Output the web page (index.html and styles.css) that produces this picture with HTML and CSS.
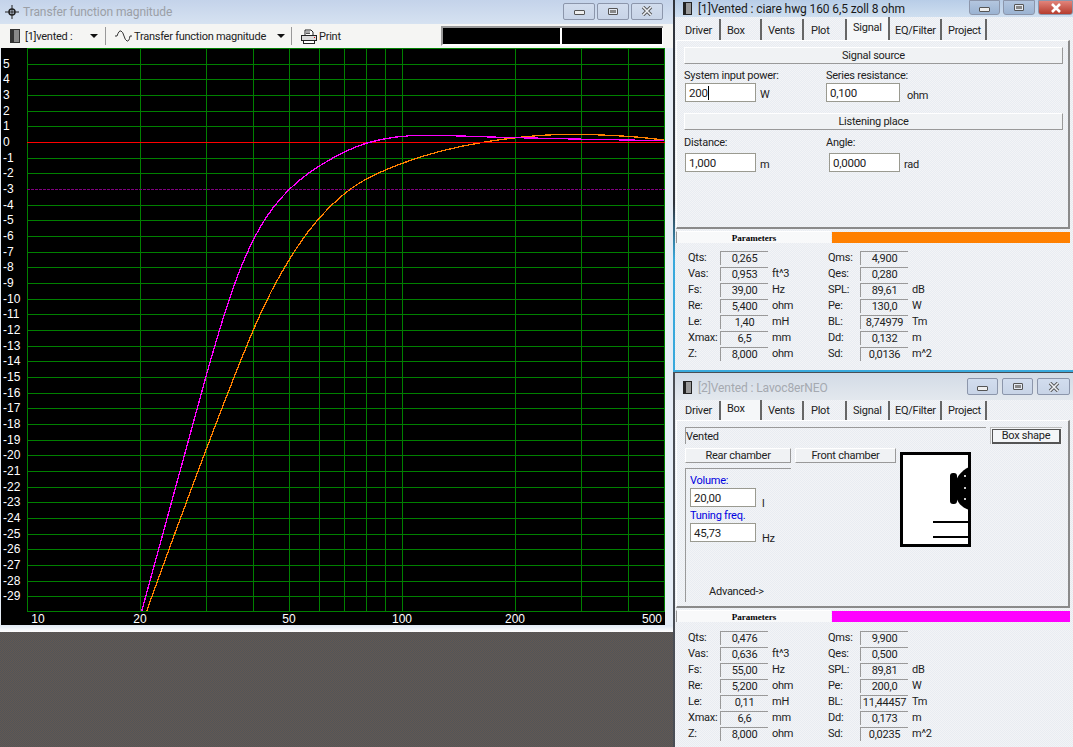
FILE: index.html
```html
<!DOCTYPE html>
<html lang="en">
<head>
    <meta charset="UTF-8">
    <title>Transfer function magnitude</title>
    <link rel="stylesheet" href="styles.css">
</head>
<body>
<div class="screen">
    <div class="left-col">
        <div class="plot-win">
            <div class="title-bar">
                <svg class="title-icon" width="14" height="14" viewBox="0 0 14 14"><path d="M0 7H14M7 0V14" stroke="#222"/><circle cx="7" cy="7" r="3" fill="none" stroke="#222" stroke-width="1.5"/></svg>
                <span class="title-text">Transfer function magnitude</span>
                <div class="caps">
                    <div class="cap cap-min"><span class="glyph-min"></span></div>
                    <div class="cap cap-max"><span class="glyph-max"></span></div>
                    <div class="cap cap-close"><svg width="12" height="10" viewBox="0 0 12 10"><path d="M2 1L10 9M10 1L2 9" stroke="#555" stroke-width="3.4"/><path d="M2 1L10 9M10 1L2 9" stroke="#eef1f6" stroke-width="1.6"/></svg></div>
                </div>
            </div>
            <div class="toolbar">
                <svg class="tool-book" width="10" height="14" viewBox="0 0 10 14"><rect width="10" height="14" fill="#333"/><rect x="4" y="1" width="5" height="12" fill="#888"/></svg>
                <span class="tool-label tool-label-doc">[1]vented :</span>
                <span class="arrow"></span>
                <span class="tool-sep"></span>
                <svg class="tool-wave" width="17" height="12" viewBox="0 0 17 12"><path d="M0 6H2Q4 0 6 1T9 6T12 11T15 6H17" fill="none" stroke="#333"/></svg>
                <span class="tool-label tool-label-tf">Transfer function magnitude</span>
                <span class="arrow"></span>
                <span class="tool-sep tool-sep-b"></span>
                <svg class="tool-print" width="16" height="15" viewBox="0 0 16 15"><path d="M4 6V1H10L12 3V6" fill="#fff" stroke="#222"/><rect x="0.5" y="6.5" width="15" height="5" fill="#ddd" stroke="#222"/><rect x="2.5" y="11.5" width="11" height="3" fill="#fff" stroke="#222"/><path d="M5 3H9M5 4.500H9" stroke="#555"/><rect x="13" y="8" width="1" height="1" fill="#e00"/></svg>
                <span class="tool-label tool-label-print">Print</span>
                <div class="readouts">
                    <span class="readout readout-a"></span>
                    <span class="readout readout-b"></span>
                </div>
            </div>
            <div class="plot-row">
                <svg class="plot" width="664" height="577" viewBox="1 48 664 577">
                    <path class="grid" d="M27 48.500H665M27 64.500H665M27 79.500H665M27 95.500H665M27 111.500H665M27 126.500H665M27 158.500H665M27 173.500H665M27 205.500H665M27 220.500H665M27 236.500H665M27 252.500H665M27 267.500H665M27 283.500H665M27 299.500H665M27 314.500H665M27 330.500H665M27 346.500H665M27 361.500H665M27 377.500H665M27 393.500H665M27 408.500H665M27 424.500H665M27 440.500H665M27 455.500H665M27 471.500H665M27 487.500H665M27 502.500H665M27 518.500H665M27 534.500H665M27 549.500H665M27 565.500H665M27 581.500H665M27 596.500H665M27 611.500H665"/>
                    <path class="grid" d="M27.500 48V612M140.500 48V612M206.500 48V612M253.500 48V612M289.500 48V612M319.500 48V612M344.500 48V612M366.500 48V612M385.500 48V612M402.500 48V612M515.500 48V612M581.500 48V612M628.500 48V612M664.500 48V612"/>
                    <path class="grid-mark" d="M27 189.500H665"/>
                    <path class="curve curve-orange" d="M146.700 611C166.470 555.600 186.230 502.400 206 450C221.770 408.200 237.530 367.800 253.300 330C267.300 296.400 281.300 271.700 295.300 250C311.870 224.300 328.430 206.600 345 193.300C364.100 178 383.200 170.600 402.300 163.300C430.400 152.600 458.600 146.200 486.700 141.700C515 137.200 543.400 134.300 571.700 134.300C590 134.300 608.400 135.200 626.700 136.300C639.200 137.050 651.800 138.500 664.300 140"/>
                    <path class="zero-line" d="M27 142.500H665"/>
                    <path class="curve curve-magenta" d="M141.700 611C163.030 532.100 184.370 453.200 205.700 377.500C213.570 349.600 221.430 322.900 229.300 299.300C237.300 275.300 245.300 256 253.300 240C262.200 222.200 271.100 209.500 280 199.300C293.100 184.200 306.200 174.100 319.300 166C334.900 156.350 350.400 148 366 143.300C385.700 137.400 405.300 135.300 425 135.300C450 135.300 475 136.550 500 137.300C554.800 138.900 609.500 139.600 664.300 140.700"/>
                    <g class="y-labels">
                        <text x="3" y="68">5</text><text x="3" y="83">4</text><text x="3" y="99">3</text><text x="3" y="115">2</text><text x="3" y="130">1</text><text x="3" y="146">0</text>
                        <text x="3" y="162">-1</text><text x="3" y="177">-2</text><text x="3" y="193">-3</text><text x="3" y="209">-4</text><text x="3" y="224">-5</text><text x="3" y="240">-6</text>
                        <text x="3" y="256">-7</text><text x="3" y="271">-8</text><text x="3" y="287">-9</text><text x="3" y="303">-10</text><text x="3" y="318">-11</text><text x="3" y="334">-12</text>
                        <text x="3" y="350">-13</text><text x="3" y="365">-14</text><text x="3" y="381">-15</text><text x="3" y="397">-16</text><text x="3" y="412">-17</text><text x="3" y="428">-18</text>
                        <text x="3" y="444">-19</text><text x="3" y="459">-20</text><text x="3" y="475">-21</text><text x="3" y="491">-22</text><text x="3" y="506">-23</text><text x="3" y="522">-24</text>
                        <text x="3" y="538">-25</text><text x="3" y="553">-26</text><text x="3" y="569">-27</text><text x="3" y="585">-28</text><text x="3" y="600">-29</text>
                    </g>
                    <g class="x-labels">
                        <text x="38" y="623">10</text><text x="140" y="623">20</text><text x="289" y="623">50</text>
                        <text x="402" y="623">100</text><text x="515" y="623">200</text><text x="652" y="623">500</text>
                    </g>
                </svg>
            </div>
            <div class="plot-foot"></div>
        </div>
        <div class="desktop"></div>
    </div>

    <div class="right-col">
        <div class="win win-one">
            <div class="win-title">
                <svg class="win-icon" width="9" height="13" viewBox="0 0 9 13"><rect width="9" height="13" fill="#222"/><rect x="3" y="1" width="5" height="11" fill="#999"/></svg>
                <span class="win-name">[1]Vented : ciare hwg 160 6,5 zoll 8 ohm</span>
                <div class="caps caps-active">
                    <div class="cap cap-min"><span class="glyph-min"></span></div>
                    <div class="cap cap-max"><span class="glyph-max"></span></div>
                    <div class="cap cap-close cap-red"><svg width="12" height="10" viewBox="0 0 12 10"><path d="M2 1L10 9M10 1L2 9" stroke="#fff" stroke-width="2.6"/></svg></div>
                </div>
            </div>
            <div class="tabs">
                <span class="tab tab-driver">Driver</span>
                <span class="tab tab-box">Box</span>
                <span class="tab tab-vents">Vents</span>
                <span class="tab tab-plot">Plot</span>
                <span class="tab tab-signal tab-on">Signal</span>
                <span class="tab tab-eq">EQ/Filter</span>
                <span class="tab tab-project">Project</span>
            </div>
            <div class="panel">
                <div class="band">Signal source</div>
                <div class="fields">
                    <div class="field">
                        <label>System input power:</label>
                        <div class="field-line"><span class="input"><span>200</span><i class="caret"></i></span><span class="unit">W</span></div>
                    </div>
                    <div class="field">
                        <label>Series resistance:</label>
                        <div class="field-line"><span class="input input-short"><span>0,100</span></span><span class="unit unit-wide">ohm</span></div>
                    </div>
                </div>
                <div class="band band-second">Listening place</div>
                <div class="fields fields-second">
                    <div class="field">
                        <label>Distance:</label>
                        <div class="field-line"><span class="input"><span>1,000</span></span><span class="unit">m</span></div>
                    </div>
                    <div class="field field-angle">
                        <label>Angle:</label>
                        <div class="field-line"><span class="input input-angle"><span>0,0000</span></span><span class="unit">rad</span></div>
                    </div>
                </div>
            </div>
            <div class="params-head">
                <span class="params-tab">Parameters</span>
                <span class="params-color color-orange"></span>
            </div>
            <div class="params">
                <span>Qts:</span><b>0,265</b><em></em><span>Qms:</span><b>4,900</b><em></em>
                <span>Vas:</span><b>0,953</b><em>ft^3</em><span>Qes:</span><b>0,280</b><em></em>
                <span>Fs:</span><b>39,00</b><em>Hz</em><span>SPL:</span><b>89,61</b><em>dB</em>
                <span>Re:</span><b>5,400</b><em>ohm</em><span>Pe:</span><b>130,0</b><em>W</em>
                <span>Le:</span><b>1,40</b><em>mH</em><span>BL:</span><b>8,74979</b><em>Tm</em>
                <span>Xmax:</span><b>6,5</b><em>mm</em><span>Dd:</span><b>0,132</b><em>m</em>
                <span>Z:</span><b>8,000</b><em>ohm</em><span>Sd:</span><b>0,0136</b><em>m^2</em>
            </div>
        </div>

        <div class="win win-two">
            <div class="win-title win-title-off">
                <svg class="win-icon" width="9" height="13" viewBox="0 0 9 13"><rect width="9" height="13" fill="#222"/><rect x="3" y="1" width="5" height="11" fill="#999"/></svg>
                <span class="win-name win-name-off">[2]Vented : Lavoc8erNEO</span>
                <div class="caps caps-two">
                    <div class="cap cap-min"><span class="glyph-min"></span></div>
                    <div class="cap cap-max"><span class="glyph-max"></span></div>
                    <div class="cap cap-close"><svg width="12" height="10" viewBox="0 0 12 10"><path d="M2 1L10 9M10 1L2 9" stroke="#555" stroke-width="3.4"/><path d="M2 1L10 9M10 1L2 9" stroke="#eef1f6" stroke-width="1.6"/></svg></div>
                </div>
            </div>
            <div class="tabs">
                <span class="tab tab-driver">Driver</span>
                <span class="tab tab-box tab-on">Box</span>
                <span class="tab tab-vents">Vents</span>
                <span class="tab tab-plot">Plot</span>
                <span class="tab tab-signal">Signal</span>
                <span class="tab tab-eq">EQ/Filter</span>
                <span class="tab tab-project">Project</span>
            </div>
            <div class="panel panel-box">
                <div class="shape-row">
                    <div class="shape-name">Vented</div>
                    <div class="shape-btn"><span>Box shape</span></div>
                </div>
                <div class="chambers">
                    <div class="band band-chamber">Rear chamber</div>
                    <div class="band band-chamber">Front chamber</div>
                    <svg class="box-drawing" width="71" height="95" viewBox="900 452 71 95">
                        <rect x="901.500" y="453.500" width="68" height="92" fill="#fff" stroke="#000" stroke-width="3"/>
                        <path d="M969 467C961 471 957 477 956 481V496C957 502 961 507 969 510Z" fill="#000"/>
                        <rect x="950" y="473" width="7" height="31" rx="3" fill="#000"/>
                        <rect x="964" y="475" width="2" height="2" fill="#ccc"/><rect x="964" y="487" width="2" height="2" fill="#ccc"/><rect x="964" y="498" width="2" height="2" fill="#ccc"/>
                        <path d="M933 522H969M933 537H969" stroke="#000" stroke-width="2"/>
                    </svg>
                    <div class="chamber">
                        <div class="chamber-label">Volume:</div>
                        <div class="field-line"><span class="input input-small"><span>20,00</span></span><span class="unit chamber-unit">l</span></div>
                        <div class="chamber-label chamber-label-b">Tuning freq.</div>
                        <div class="field-line"><span class="input input-small"><span>45,73</span></span><span class="unit chamber-unit">Hz</span></div>
                        <div class="advanced">Advanced-&gt;</div>
                    </div>
                </div>
            </div>
            <div class="params-head">
                <span class="params-tab">Parameters</span>
                <span class="params-color color-magenta"></span>
            </div>
            <div class="params">
                <span>Qts:</span><b>0,476</b><em></em><span>Qms:</span><b>9,900</b><em></em>
                <span>Vas:</span><b>0,636</b><em>ft^3</em><span>Qes:</span><b>0,500</b><em></em>
                <span>Fs:</span><b>55,00</b><em>Hz</em><span>SPL:</span><b>89,81</b><em>dB</em>
                <span>Re:</span><b>5,200</b><em>ohm</em><span>Pe:</span><b>200,0</b><em>W</em>
                <span>Le:</span><b>0,11</b><em>mH</em><span>BL:</span><b>11,44457</b><em>Tm</em>
                <span>Xmax:</span><b>6,6</b><em>mm</em><span>Dd:</span><b>0,173</b><em>m</em>
                <span>Z:</span><b>8,000</b><em>ohm</em><span>Sd:</span><b>0,0235</b><em>m^2</em>
            </div>
        </div>
    </div>
</div>
</body>
</html>
```
FILE: styles.css
```css
/* Global */
html, body {
    margin: 0;
    padding: 0;
}

body {
    width: 1073px;
    height: 747px;
    overflow: hidden;
    font-family: Roboto, 'Liberation Sans', sans-serif;
    font-size: 11px;
    letter-spacing: -0.25px;
    color: #222;
}

.screen {
    display: grid;
    grid-template-columns: 673px 400px;
    height: 747px;
}

/* Left column: plot window and desktop */
.left-col {
    display: flex;
    flex-direction: column;
    height: 747px;
}

.plot-win {
    height: 632px;
    background: #e6edf6;
    display: flex;
    flex-direction: column;
}

.desktop {
    flex: 1;
    background: repeating-conic-gradient(#655850 0 25%, #50555a 0 50%) 0 0 / 2px 2px;
}

.title-bar {
    height: 24px;
    display: flex;
    align-items: center;
    padding-left: 5px;
    background: linear-gradient(#c4d3ea, #d6e2f1);
}

.title-text {
    margin-left: 4px;
    font-size: 12px;
    letter-spacing: -0.08px;
    color: #9b9fa6;
}

.caps {
    margin-left: auto;
    margin-right: 10px;
    margin-bottom: 2px;
    display: flex;
    gap: 2px;
}

.cap {
    box-sizing: border-box;
    width: 32px;
    height: 17px;
    border: 1px solid #8c96ab;
    border-radius: 2px;
    display: flex;
    align-items: center;
    justify-content: center;
    background: linear-gradient(#d2ddee, #c8d4e7);
}

.glyph-min {
    width: 9px;
    height: 3px;
    margin-top: 3px;
    border: 1px solid #555;
    border-radius: 1px;
    background: #eee;
}

.glyph-max {
    width: 8px;
    height: 5px;
    border: 1px solid #555;
    border-radius: 1px;
    box-shadow: inset 0 0 0 1px #e4e9f2;
    background: #888;
}

/* Toolbar */
.toolbar {
    height: 24px;
    display: flex;
    align-items: center;
    background: #f5f5f3;
}

.tool-book {
    margin-left: 10px;
}

.tool-label {
    white-space: nowrap;
    color: #222;
}

.tool-label-doc {
    margin-left: 5px;
    width: 65px;
}

.tool-label-tf {
    margin-left: 2px;
    width: 143px;
}

.tool-label-print {
    margin-left: 2px;
}

.arrow {
    width: 0;
    height: 0;
    border-left: 4px solid transparent;
    border-right: 4px solid transparent;
    border-top: 4px solid #111;
}

.tool-sep {
    width: 1px;
    height: 18px;
    background: #999;
    margin-left: 7px;
}

.tool-sep-b {
    margin-left: 6px;
}

.tool-wave {
    margin-left: 9px;
}

.tool-print {
    margin-left: 9px;
}

.readouts {
    margin-left: auto;
    margin-right: 10px;
    width: 222px;
    height: 20px;
    display: flex;
    gap: 2px;
    box-sizing: border-box;
    background: #fff;
    border-top: 2px solid #999;
    border-left: 2px solid #999;
    border-bottom: 2px solid #fff;
    padding-right: 1px;
}

.readout {
    background: #000;
    height: 16px;
}

.readout-a {
    width: 117px;
}

.readout-b {
    flex: 1;
}

/* Plot */
.plot-row {
    height: 577px;
    padding-left: 1px;
    background: #e6edf6;
}

.plot {
    display: block;
    background: #000;
    shape-rendering: crispEdges;
}

.grid {
    fill: none;
    stroke: #008000;
    stroke-width: 1;
}

.grid-mark {
    fill: none;
    stroke: #800080;
    stroke-width: 1;
    stroke-dasharray: 3 1;
}

.zero-line {
    fill: none;
    stroke: #ff0000;
    stroke-width: 1;
}

.curve {
    fill: none;
    stroke-width: 1.3;
}

.curve-orange {
    stroke: #ff8000;
}

.curve-magenta {
    stroke: #ff00ff;
}

.y-labels text,
.x-labels text {
    fill: #fff;
    font-family: 'Liberation Sans', sans-serif;
    font-size: 12px;
    letter-spacing: 0;
    shape-rendering: auto;
}

.x-labels text {
    text-anchor: middle;
}

.plot-foot {
    height: 7px;
    background: linear-gradient(#dfe8f3, #fff);
}

/* Right column windows */
.right-col {
    display: flex;
    flex-direction: column;
    height: 747px;
}

.win {
    box-sizing: border-box;
    background: repeating-conic-gradient(#f3f4f6 0 25%, #e8ecf2 0 50%) 0 0 / 2px 2px;
    border-left: 2px solid #39a9dc;
    padding-right: 3px;
}

.win-one {
    height: 372px;
    border-bottom: 2px solid #39a9dc;
    border-image: linear-gradient(#30343c, #30343c 55%, #39a9dc 70%) 1;
}

.win-two {
    height: 375px;
    border-left-color: #4a4e55;
    border-top: 1px solid #4a4e55;
}

.win-title {
    height: 17px;
    display: flex;
    align-items: center;
    padding-left: 8px;
    margin-right: -3px;
    background: linear-gradient(#b8cde7, #cfdff0);
}

.win-title-off {
    box-sizing: border-box;
    height: 27px;
    padding-top: 2px;
    background: linear-gradient(#d3dbe6, #e3e8ee);
}

.win-icon {
    flex: none;
}

.win-name {
    margin-left: 6px;
    font-size: 12px;
    letter-spacing: -0.1px;
    white-space: nowrap;
    color: #1a1a1a;
}

.win-name-off {
    color: #a5a9b0;
}

.caps-active {
    margin: -2px 0 0 auto;
    gap: 3px;
}

.caps-active .cap {
    height: 15px;
    width: 31px;
    border-radius: 0 0 3px 3px;
    background: linear-gradient(#b3c6df, #9bb3d2);
}

.caps-active .cap-max {
    width: 32px;
}

.caps-active .cap-red {
    width: 35px;
    background: linear-gradient(#e2847a, #b53c2e);
}

.caps-two {
    margin: 0 3px 2px auto;
    gap: 4px;
}

.caps-two .cap {
    width: 31px;
}

.caps-two .cap-close {
    width: 33px;
}

/* Tabs */
.tabs {
    height: 23px;
    display: flex;
    align-items: flex-end;
    padding-left: 1px;
}

.win-two .tabs {
    height: 20px;
}

.tab {
    box-sizing: border-box;
    height: 21px;
    padding-top: 5px;
    border-right: 2px solid #666;
    white-space: nowrap;
}

.win-two .tab {
    height: 19px;
    padding-top: 3px;
}

.tab-on {
    height: 23px;
    padding-top: 4px;
    background: #f5f7f9;
}

.win-two .tab-on {
    height: 20px;
    padding-top: 2px;
}

.tab-driver { width: 45px; padding-left: 9px; }
.tab-box { width: 41px; padding-left: 6px; }
.tab-vents { width: 42px; padding-left: 6px; }
.tab-plot { width: 43px; padding-left: 7px; }
.tab-signal { width: 43px; padding-left: 6px; }
.tab-eq { width: 52px; padding-left: 5px; }
.tab-project { width: 45px; padding-left: 6px; }

/* Panels */
.panel {
    box-sizing: border-box;
    height: 189px;
    margin-left: 1px;
    padding: 6px 5px 0 7px;
    border-top: 1px solid #fff;
    border-left: 1px solid #fff;
    border-right: 2px solid #8a8a8a;
    border-bottom: 2px solid #8a8a8a;
}

.band {
    height: 15px;
    line-height: 16px;
    text-align: center;
    background: #f0f2f4;
    border-top: 1px solid #fff;
    border-left: 1px solid #fff;
    border-right: 1px solid #999;
    border-bottom: 1px solid #999;
    white-space: nowrap;
}

.band-second {
    margin-top: 11px;
}

.fields {
    display: grid;
    grid-template-columns: 142px 1fr;
    margin-top: 4px;
}

.fields-second {
    margin-top: 5px;
}

.fields-second .field-line {
    margin-top: 3px;
}

.field label {
    display: block;
    height: 15px;
    line-height: 15px;
    white-space: nowrap;
}

.field-line {
    display: flex;
    align-items: flex-start;
    height: 19px;
}

.fields .field-line {
    padding-left: 1px;
}

.fields .field:nth-child(2) .field-line {
    padding-left: 0;
}

.fields .field-angle:nth-child(2) .field-line {
    padding-left: 3px;
}

.input {
    box-sizing: border-box;
    width: 71px;
    height: 19px;
    display: flex;
    align-items: center;
    padding-left: 3px;
    background: #fff;
    border: 1px solid #9a9a90;
    font-size: 11.5px;
}

.input-short {
    width: 74px;
}

.input-small {
    width: 66px;
}

.caret {
    width: 1px;
    height: 14px;
    background: #000;
}

.unit {
    margin-left: 4px;
    margin-top: 5px;
    white-space: nowrap;
}

.unit-wide {
    margin-left: 7px;
    margin-top: 6px;
}

/* Parameters table */
.params-head {
    display: flex;
    height: 12px;
    margin-top: 2px;
    margin-left: 1px;
}

.params-tab {
    width: 155px;
    line-height: 12px;
    text-align: center;
    font-family: 'Liberation Serif', serif;
    font-size: 9px;
    font-weight: bold;
    letter-spacing: 0;
    color: #000;
    background: #f8f9fa;
    border-top: 1px solid #fff;
    border-left: 1px solid #999;
    box-sizing: border-box;
}

.params-color {
    flex: 1;
    margin: 1px 0 0 1px;
}

.color-orange {
    background: #ff8000;
}

.color-magenta {
    background: #ff00ff;
}

.params {
    display: grid;
    grid-template-columns: 32px 48px 60px 32px 48px 1fr;
    grid-auto-rows: 16px;
    margin: 8px 0 0 13px;
    line-height: 14px;
}

.win-two .params {
    margin-top: 9px;
}

.params span,
.params em {
    font-style: normal;
    white-space: nowrap;
}

.params em {
    padding-left: 4px;
}

.params b {
    box-sizing: border-box;
    height: 14px;
    font-weight: normal;
    text-align: center;
    white-space: nowrap;
    border-top: 1px solid #999;
    border-left: 1px solid #999;
    line-height: 13px;
}

/* Box tab */
.panel-box {
    height: 188px;
    padding: 6px 0 0 8px;
}

.shape-row {
    display: flex;
    align-items: flex-start;
}

.shape-name {
    box-sizing: border-box;
    width: 301px;
    height: 17px;
    line-height: 17px;
    border-top: 1px solid #999;
    border-left: 1px solid #999;
}

.shape-btn {
    box-sizing: border-box;
    width: 72px;
    height: 17px;
    margin-left: 4px;
    padding: 1px;
    background: #f4f6f8;
    border-top: 1px solid #bbb;
    border-left: 1px solid #bbb;
}

.shape-btn span {
    display: block;
    box-sizing: border-box;
    height: 15px;
    line-height: 12px;
    text-align: center;
    white-space: nowrap;
    border: 1px solid #555;
    border-right-width: 2px;
    border-bottom-width: 2px;
}

.chambers {
    display: grid;
    grid-template-columns: 106px 101px 71px;
    grid-template-rows: 15px auto;
    column-gap: 4px;
    row-gap: 5px;
    margin-top: 4px;
    align-items: start;
}

.band-chamber {
    height: 15px;
    line-height: 14px;
    box-sizing: border-box;
}

.box-drawing {
    grid-column: 3;
    grid-row: 1 / span 2;
    margin-top: 4px;
}

.chamber {
    grid-column: 1;
    grid-row: 2;
    box-sizing: border-box;
    height: 134px;
    padding: 5px 0 0 4px;
    border-top: 1px solid #999;
    border-left: 1px solid #999;
}

.chamber-label {
    height: 14px;
    line-height: 14px;
    color: #0000e0;
}

.chamber-label-b {
    margin-top: 2px;
}

.chamber-unit {
    margin-left: 6px;
    margin-top: 9px;
}

.advanced {
    margin-top: 43px;
    margin-left: 19px;
    white-space: nowrap;
}
```
